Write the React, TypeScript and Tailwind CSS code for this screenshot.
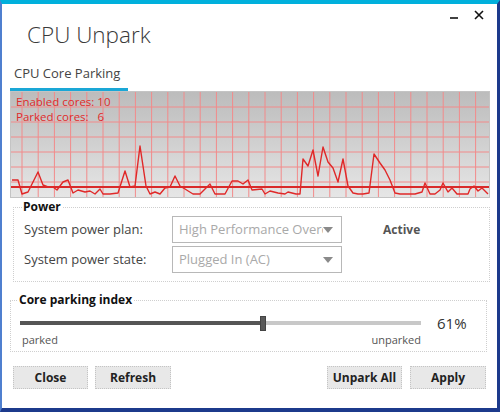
import React from 'react'

const font = { fontFamily: '"Open Sans", "Noto Sans", "Liberation Sans", sans-serif' }

// load samples, absolute page coords (x, y)
const samples: [number, number][] = [
  [12, 180], [18, 180], [22, 194], [28, 192], [38, 172], [43, 185], [48, 187], [53, 187], [57, 190],
  [63, 182], [68, 180], [73, 193], [78, 190], [85, 192], [90, 191], [95, 194], [100, 189], [103, 194],
  [110, 194], [118, 193], [125, 171], [130, 187], [135, 186], [140, 146], [146, 186], [150, 194],
  [155, 192], [160, 194], [165, 188], [170, 187], [175, 176], [180, 186], [185, 189], [193, 194],
  [200, 194], [210, 184], [215, 194], [225, 194], [232, 181], [238, 181], [243, 184], [248, 180],
  [252, 190], [262, 189], [265, 194], [270, 191], [278, 193], [285, 194], [288, 192], [296, 194],
  [300, 194], [303, 159], [308, 166], [313, 150], [318, 176], [323, 147], [328, 162], [333, 168],
  [338, 182], [343, 159], [348, 186], [353, 193], [358, 194], [363, 194], [369, 193], [374, 154],
  [380, 163], [385, 170], [390, 180], [395, 193], [400, 194], [410, 194], [415, 194], [422, 192],
  [425, 183], [430, 194], [435, 194], [440, 190], [443, 183], [448, 192], [452, 188], [457, 194],
  [460, 194], [468, 194], [470, 189], [474, 186], [478, 191], [482, 188], [486, 192], [488, 194],
]

function Chart() {
  const cols = Array.from({ length: 29 }, (_, i) => 11 + i * 16.2)
  const rows = [15, 30, 45, 60, 75, 90]
  const pts = samples.map(([x, y]) => `${x - 11},${y - 92}`).join(' ')
  return (
    <div className="relative ml-[8px] w-[480px] h-[107px] border border-[#c4c4c4] bg-gradient-to-b from-[#bcbcbc] to-[#e6e6e6]">
      <svg width="478" height="105" className="block">
        {cols.map(x => <line key={x} x1={x} y1="0" x2={x} y2="105" stroke="#f28a8a" strokeWidth="1" />)}
        {rows.map(y => <line key={y} x1="0" y1={y} x2="478" y2={y} stroke="#f28a8a" strokeWidth="1" />)}
        <line x1="0" y1="95" x2="478" y2="95" stroke="#d92a2a" strokeWidth="2" />
        <polyline points={pts} fill="none" stroke="#e02828" strokeWidth="1.4" strokeLinejoin="round" />
      </svg>
      <div className="absolute left-[5px] top-[3px] flex flex-col text-[11.5px] text-[#e02a2a]">
        <span className="h-[15px] leading-[14px]">Enabled cores: 10</span>
        <span className="h-[15px] leading-[14px]">Parked cores:&nbsp;&nbsp; 6</span>
      </div>
    </div>
  )
}

function Select({ value }: { value: string }) {
  return (
    <div className="flex items-center w-[170px] h-[27px] border border-[#b8b8b8] bg-white pl-[6px] pr-[8px]">
      <span className="flex-1 overflow-hidden whitespace-nowrap text-[13px] text-[#a9a9a9]">{value}</span>
      <svg width="10" height="6" viewBox="0 0 10 6"><path d="M0 0h10L5 6z" fill="#8a8a8a" /></svg>
    </div>
  )
}

function Btn({ label, w }: { label: string; w: string }) {
  return (
    <button className={`${w} h-[23px] bg-[#e8e8e8] border border-dotted border-[#c4c4c4] text-[12px] font-bold text-[#222]`}>
      {label}
    </button>
  )
}

export default function App() {
  return (
    <div style={font} className="relative w-[500px] h-[412px] bg-white border-t-4 border-t-[#00b0dc] border-l-2 border-l-[#4f7fcf] border-r-[3px] border-r-[#1c3a8c] border-b-4 border-b-[#1c3a8c] flex flex-col text-[#333]">
      <div className="absolute right-[13px] top-[5px] flex items-center gap-[16px]">
        <svg width="8" height="12" viewBox="0 0 8 12"><path d="M0 9h8" stroke="#111" strokeWidth="1.6" /></svg>
        <svg width="10" height="10" viewBox="0 0 10 10"><path d="M1 1l8 8M9 1l-8 8" stroke="#111" strokeWidth="1.6" /></svg>
      </div>

      <div className="mt-[17px] pl-[25px] text-[22.5px] leading-[28px] font-light text-[#3a3a3a]">CPU Unpark</div>

      <div className="mt-[16px] pl-[12px] text-[13px] leading-[16px] text-[#444]">CPU Core Parking</div>
      <div className="mt-[7px] ml-[8px] w-[118px] h-[3px] bg-[#1aa7d6]" />
      <Chart />

      <fieldset className="mt-[2px] ml-[11px] w-[477px] border border-dotted border-[#cfcfcf] px-[10px] pb-[8px]">
        <legend className="px-[1px] -ml-[2px] text-[12px] leading-[14px] font-bold text-[#111]">Power</legend>
        <div className="mt-[2px] flex flex-col gap-[3px]">
          <div className="flex items-center">
            <span className="w-[148px] text-[13px] text-[#444]">System power plan:</span>
            <Select value="High Performance Overclocked" />
            <span className="ml-[41px] text-[12px] font-bold text-[#555]">Active</span>
          </div>
          <div className="flex items-center">
            <span className="w-[148px] text-[13px] text-[#444]">System power state:</span>
            <Select value="Plugged In (AC)" />
          </div>
        </div>
      </fieldset>

      <fieldset className="mt-[11px] ml-[8px] w-[477px] border border-dotted border-[#cfcfcf] pl-[9px] pr-[10px] pb-[4px]">
        <legend className="px-[1px] -ml-[2px] text-[12px] leading-[14px] font-bold text-[#111]">Core parking index</legend>
        <div className="mt-[6px] flex items-center h-[20px]">
          <div className="relative w-[401px] h-[16px] flex items-center">
            <div className="w-[240px] h-[4px] bg-[#555]" />
            <div className="w-[6px] h-[15px] bg-[#5a5a5a] border border-[#444]" />
            <div className="flex-1 h-[4px] bg-[#c8c8c8]" />
          </div>
          <span className="ml-[16px] text-[15px] text-[#333]">61%</span>
        </div>
        <div className="flex w-[401px] justify-between text-[11px] leading-[14px] text-[#555] pl-[2px]">
          <span>parked</span>
          <span>unparked</span>
        </div>
      </fieldset>

      <div className="mt-[14px] flex pl-[11px] pr-[11px]">
        <div className="flex gap-[7px]">
          <Btn label="Close" w="w-[75px]" />
          <Btn label="Refresh" w="w-[76px]" />
        </div>
        <div className="ml-auto flex gap-[8px]">
          <Btn label="Unpark All" w="w-[75px]" />
          <Btn label="Apply" w="w-[76px]" />
        </div>
      </div>
    </div>
  )
}
